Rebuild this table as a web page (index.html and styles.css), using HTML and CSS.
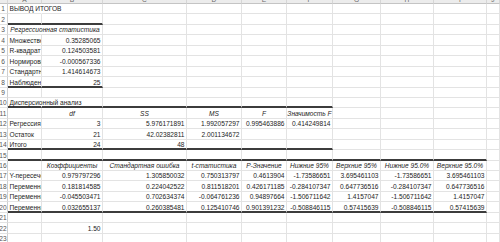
FILE: index.html
```html
<!DOCTYPE html>
<html lang="ru">
<head>
<meta charset="utf-8">
<title>Вывод итогов</title>
<link rel="stylesheet" href="styles.css">
</head>
<body>
<div class="sheet">
  <div class="row hdr">
    <div class="c corner"></div><div class="c col">A</div><div class="c col">B</div><div class="c col">C</div><div class="c col">D</div><div class="c col">E</div><div class="c col">F</div><div class="c col">G</div><div class="c col">H</div><div class="c col">I</div><div class="c col">J</div>
  </div>

  <div class="row">
    <div class="c rh">1</div><div class="c t ov nr">ВЫВОД ИТОГОВ</div><div class="c"></div><div class="c"></div><div class="c"></div><div class="c"></div><div class="c"></div><div class="c"></div><div class="c"></div><div class="c"></div><div class="c"></div>
  </div>
  <div class="row">
    <div class="c rh">2</div><div class="c tb"></div><div class="c tb"></div><div class="c"></div><div class="c"></div><div class="c"></div><div class="c"></div><div class="c"></div><div class="c"></div><div class="c"></div><div class="c"></div>
  </div>
  <div class="row">
    <div class="c rh">3</div><div class="c h span2 ov">Регрессионная статистика</div><div class="c"></div><div class="c"></div><div class="c"></div><div class="c"></div><div class="c"></div><div class="c"></div><div class="c"></div><div class="c"></div>
  </div>
  <div class="row">
    <div class="c rh">4</div><div class="c t">Множественный R</div><div class="c n">0.35285065</div><div class="c"></div><div class="c"></div><div class="c"></div><div class="c"></div><div class="c"></div><div class="c"></div><div class="c"></div><div class="c"></div>
  </div>
  <div class="row">
    <div class="c rh">5</div><div class="c t">R-квадрат</div><div class="c n">0.124503581</div><div class="c"></div><div class="c"></div><div class="c"></div><div class="c"></div><div class="c"></div><div class="c"></div><div class="c"></div><div class="c"></div>
  </div>
  <div class="row">
    <div class="c rh">6</div><div class="c t">Нормированный R-квадрат</div><div class="c n">-0.000567336</div><div class="c"></div><div class="c"></div><div class="c"></div><div class="c"></div><div class="c"></div><div class="c"></div><div class="c"></div><div class="c"></div>
  </div>
  <div class="row">
    <div class="c rh">7</div><div class="c t">Стандартная ошибка</div><div class="c n">1.414614673</div><div class="c"></div><div class="c"></div><div class="c"></div><div class="c"></div><div class="c"></div><div class="c"></div><div class="c"></div><div class="c"></div>
  </div>
  <div class="row">
    <div class="c rh">8</div><div class="c t tb">Наблюдения</div><div class="c n tb">25</div><div class="c"></div><div class="c"></div><div class="c"></div><div class="c"></div><div class="c"></div><div class="c"></div><div class="c"></div><div class="c"></div>
  </div>
  <div class="row">
    <div class="c rh">9</div><div class="c"></div><div class="c"></div><div class="c"></div><div class="c"></div><div class="c"></div><div class="c"></div><div class="c"></div><div class="c"></div><div class="c"></div><div class="c"></div>
  </div>
  <div class="row">
    <div class="c rh">10</div><div class="c t ov nr tb">Дисперсионный анализ</div><div class="c tb"></div><div class="c tb"></div><div class="c tb"></div><div class="c tb"></div><div class="c tb"></div><div class="c"></div><div class="c"></div><div class="c"></div><div class="c"></div>
  </div>
  <div class="row">
    <div class="c rh">11</div><div class="c"></div><div class="c h">df</div><div class="c h">SS</div><div class="c h">MS</div><div class="c h">F</div><div class="c h">Значимость F</div><div class="c"></div><div class="c"></div><div class="c"></div><div class="c"></div>
  </div>
  <div class="row">
    <div class="c rh">12</div><div class="c t">Регрессия</div><div class="c n">3</div><div class="c n">5.976171891</div><div class="c n">1.992057297</div><div class="c n">0.995463886</div><div class="c n">0.414249814</div><div class="c"></div><div class="c"></div><div class="c"></div><div class="c"></div>
  </div>
  <div class="row">
    <div class="c rh">13</div><div class="c t">Остаток</div><div class="c n">21</div><div class="c n">42.02382811</div><div class="c n">2.001134672</div><div class="c"></div><div class="c"></div><div class="c"></div><div class="c"></div><div class="c"></div><div class="c"></div>
  </div>
  <div class="row">
    <div class="c rh">14</div><div class="c t tb">Итого</div><div class="c n tb">24</div><div class="c n tb">48</div><div class="c tb"></div><div class="c tb"></div><div class="c tb"></div><div class="c"></div><div class="c"></div><div class="c"></div><div class="c"></div>
  </div>
  <div class="row">
    <div class="c rh">15</div><div class="c tb"></div><div class="c tb"></div><div class="c tb"></div><div class="c tb"></div><div class="c tb"></div><div class="c tb"></div><div class="c tb"></div><div class="c tb"></div><div class="c tb"></div><div class="c"></div>
  </div>
  <div class="row">
    <div class="c rh">16</div><div class="c"></div><div class="c h">Коэффициенты</div><div class="c h">Стандартная ошибка</div><div class="c h">t-статистика</div><div class="c h">P-Значение</div><div class="c h">Нижние 95%</div><div class="c h">Верхние 95%</div><div class="c h">Нижние 95.0%</div><div class="c h">Верхние 95.0%</div><div class="c"></div>
  </div>
  <div class="row">
    <div class="c rh">17</div><div class="c t">Y-пересечение</div><div class="c n">0.979797296</div><div class="c n">1.305850032</div><div class="c n">0.750313797</div><div class="c n">0.4613904</div><div class="c n">-1.73586651</div><div class="c n">3.695461103</div><div class="c n">-1.73586651</div><div class="c n">3.695461103</div><div class="c"></div>
  </div>
  <div class="row">
    <div class="c rh">18</div><div class="c t">Переменная X 1</div><div class="c n">0.181814585</div><div class="c n">0.224042522</div><div class="c n">0.811518201</div><div class="c n">0.426171185</div><div class="c n">-0.284107347</div><div class="c n">0.647736516</div><div class="c n">-0.284107347</div><div class="c n">0.647736516</div><div class="c"></div>
  </div>
  <div class="row">
    <div class="c rh">19</div><div class="c t">Переменная X 2</div><div class="c n">-0.045503471</div><div class="c n">0.702634374</div><div class="c n">-0.064761236</div><div class="c n">0.94897664</div><div class="c n">-1.506711642</div><div class="c n">1.4157047</div><div class="c n">-1.506711642</div><div class="c n">1.4157047</div><div class="c"></div>
  </div>
  <div class="row">
    <div class="c rh">20</div><div class="c t tb">Переменная X 3</div><div class="c n tb">0.032655137</div><div class="c n tb">0.260385481</div><div class="c n tb">0.125410746</div><div class="c n tb">0.901391232</div><div class="c n tb">-0.508846115</div><div class="c n tb">0.57415639</div><div class="c n tb">-0.508846115</div><div class="c n tb">0.57415639</div><div class="c"></div>
  </div>
  <div class="row">
    <div class="c rh">21</div><div class="c"></div><div class="c"></div><div class="c"></div><div class="c"></div><div class="c"></div><div class="c"></div><div class="c"></div><div class="c"></div><div class="c"></div><div class="c"></div>
  </div>
  <div class="row">
    <div class="c rh">22</div><div class="c"></div><div class="c n">1.50</div><div class="c"></div><div class="c"></div><div class="c"></div><div class="c"></div><div class="c"></div><div class="c"></div><div class="c"></div><div class="c"></div>
  </div>
  <div class="row">
    <div class="c rh">23</div><div class="c"></div><div class="c"></div><div class="c"></div><div class="c"></div><div class="c"></div><div class="c"></div><div class="c"></div><div class="c"></div><div class="c"></div><div class="c"></div>
  </div>
</div>
</body>
</html>
```

FILE: styles.css
```css
html, body {
  margin: 0;
  padding: 0;
  background: #ffffff;
  overflow: hidden;
}

.sheet {
  display: flex;
  flex-direction: column;
  width: 500px;
  font-family: "Liberation Sans", Arial, sans-serif;
  font-size: 6.6px;
  color: #1c1c1c;
}

.row {
  display: grid;
  grid-template-columns: 8px 34px 61px 84px 55px 45px 46px 48px 53px 53px 13px;
  height: 10.45px;
}

.c {
  box-sizing: border-box;
  border-right: 1px solid #e3e3e3;
  border-bottom: 1px solid #e3e3e3;
  display: flex;
  align-items: flex-end;
  padding: 0 1.5px 1px 1.5px;
  line-height: 7px;
  white-space: nowrap;
  overflow: hidden;
  min-width: 0;
}

.hdr {
  height: 4px;
}

.hdr .c {
  background: #ececec;
  border-bottom: 1px solid #c4c4c4;
  border-right: 1px solid #d6d6d6;
  color: #6a6a6a;
  justify-content: center;
  padding: 0;
  line-height: 6px;
  align-items: flex-end;
}

.rh {
  justify-content: center;
  padding: 0 1px 1px 0;
  color: #555555;
  border-right: 1px solid #cfcfcf;
}

.t {
  justify-content: flex-start;
}

.n {
  justify-content: flex-end;
}

.h {
  justify-content: center;
  font-style: italic;
  overflow: visible;
}

.ov {
  overflow: visible;
  position: relative;
  z-index: 1;
}

.nr {
  border-right-color: transparent;
}

.span2 {
  grid-column: span 2;
}

.tb {
  border-bottom: 2px solid #3c3c3c;
  padding-bottom: 0;
}
```
